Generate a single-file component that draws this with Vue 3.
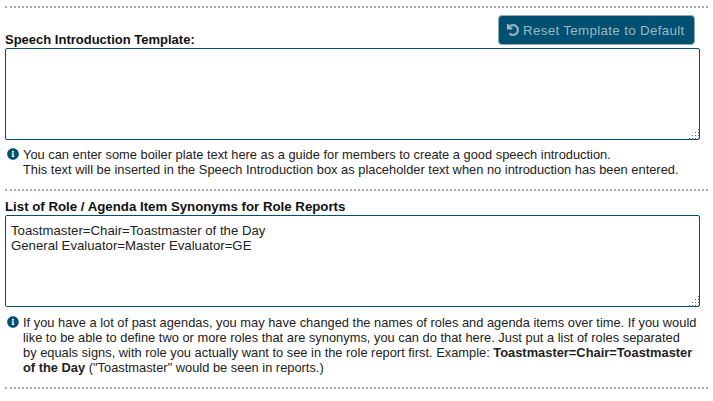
<template>
  <div class="page">
    <hr class="sep" />
    <div class="intro-head">
      <label class="field-label">Speech Introduction Template:</label>
      <button class="reset-btn" type="button" disabled>
        <svg class="undo" viewBox="0 0 512 512" width="12" height="12">
          <path fill="currentColor" stroke="currentColor" stroke-width="20" d="M212.333 224.333H12c-6.627 0-12-5.373-12-12V12C0 5.373 5.373 0 12 0h48c6.627 0 12 5.373 12 12v78.112C117.773 39.279 184.26 7.47 258.175 8.007c136.906.994 246.448 111.623 246.157 248.532C504.041 393.258 393.12 504 256.333 504c-64.089 0-122.496-24.313-166.51-64.215-5.099-4.622-5.334-12.554-.467-17.42l33.967-33.967c4.474-4.474 11.662-4.717 16.401-.525C170.76 415.336 211.58 432 256.333 432c97.268 0 176-78.716 176-176 0-97.267-78.716-176-176-176-58.496 0-110.28 28.476-142.274 72.333h98.274c6.627 0 12 5.373 12 12v48c0 6.627-5.373 12-12 12z" />
        </svg>
        Reset Template to Default
      </button>
    </div>
    <div class="area-wrap">
      <textarea class="area" readonly></textarea>
      <svg class="grip" width="10" height="10" viewBox="0 0 10 10">
        <rect v-for="d in gripDots" :key="d[0] + '-' + d[1]" :x="d[0]" :y="d[1]" width="1" height="1" fill="#666" />
      </svg>
    </div>
    <div class="help">
      <svg class="info" viewBox="0 0 512 512" width="12" height="12">
        <path fill="#005072" d="M256 8C119.043 8 8 119.083 8 256c0 136.997 111.043 248 248 248s248-111.003 248-248C504 119.083 392.957 8 256 8zm0 110c23.196 0 42 18.804 42 42s-18.804 42-42 42-42-18.804-42-42 18.804-42 42-42zm56 254c0 6.627-5.373 12-12 12h-88c-6.627 0-12-5.373-12-12v-24c0-6.627 5.373-12 12-12h12v-64h-12c-6.627 0-12-5.373-12-12v-24c0-6.627 5.373-12 12-12h64c6.627 0 12 5.373 12 12v100h12c6.627 0 12 5.373 12 12v24z" />
      </svg>
      <p>You can enter some boiler plate text here as a guide for members to create a good speech introduction.<br />This text will be inserted in the Speech Introduction box as placeholder text when no introduction has been entered.</p>
    </div>
    <hr class="sep" />
    <label class="field-label list-label">List of Role / Agenda Item Synonyms for Role Reports</label>
    <div class="area-wrap">
      <textarea class="area" readonly :value="synonyms"></textarea>
      <svg class="grip" width="10" height="10" viewBox="0 0 10 10">
        <rect v-for="d in gripDots" :key="d[0] + '-' + d[1]" :x="d[0]" :y="d[1]" width="1" height="1" fill="#666" />
      </svg>
    </div>
    <div class="help help-list">
      <svg class="info" viewBox="0 0 512 512" width="12" height="12">
        <path fill="#005072" d="M256 8C119.043 8 8 119.083 8 256c0 136.997 111.043 248 248 248s248-111.003 248-248C504 119.083 392.957 8 256 8zm0 110c23.196 0 42 18.804 42 42s-18.804 42-42 42-42-18.804-42-42 18.804-42 42-42zm56 254c0 6.627-5.373 12-12 12h-88c-6.627 0-12-5.373-12-12v-24c0-6.627 5.373-12 12-12h12v-64h-12c-6.627 0-12-5.373-12-12v-24c0-6.627 5.373-12 12-12h64c6.627 0 12 5.373 12 12v100h12c6.627 0 12 5.373 12 12v24z" />
      </svg>
      <p>If you have a lot of past agendas, you may have changed the names of roles and agenda items over time. If you would like to be able to define two or more roles that are synonyms, you can do that here. Just put a list of roles separated<br />by equals signs, with role you actually want to see in the role report first. Example: <b>Toastmaster=Chair=Toastmaster of the Day</b> ("Toastmaster" would be seen in reports.)</p>
    </div>
    <hr class="sep" />
  </div>
</template>

<script setup>
const synonyms = 'Toastmaster=Chair=Toastmaster of the Day\nGeneral Evaluator=Master Evaluator=GE'

const gripDots = [
  [9, 0],
  [6, 3], [9, 3],
  [3, 6], [6, 6], [9, 6],
  [0, 9], [3, 9], [6, 9], [9, 9]
]
</script>

<style>
html,
body {
  background: #fff;
}
</style>

<style scoped>
.page {
  width: 703px;
  padding: 6px 0 0 5px;
  font-family: "Liberation Sans", Arial, sans-serif;
  font-size: 13px;
  color: #222;
}

.sep {
  border: 0;
  border-top: 2px dotted #aaa;
  margin: 0;
  height: 0;
}

.intro-head {
  display: flex;
  justify-content: space-between;
  align-items: flex-end;
  padding: 7px 13px 0 0;
}

.reset-btn {
  display: flex;
  align-items: center;
  gap: 4px;
  width: 197px;
  height: 30px;
  margin-bottom: 2px;
  padding: 0 0 0 8px;
  box-sizing: border-box;
  background: #005072;
  border: 1px solid #8fa8b4;
  border-radius: 4px;
  color: #9db6c1;
  font-family: inherit;
  font-size: 13.33px;
  letter-spacing: .34px;
}

.field-label {
  display: block;
  font-weight: 700;
  font-size: 13px;
  line-height: 15px;
  color: #111;
}

.list-label {
  margin-top: 8px;
  font-size: 13.25px;
}

.area-wrap {
  position: relative;
  width: 695px;
  height: 92px;
  margin-top: 1px;
}

.area {
  display: block;
  width: 100%;
  height: 100%;
  box-sizing: border-box;
  margin: 0;
  padding: 7px 5px;
  border: 1px solid #005072;
  border-radius: 2px;
  resize: none;
  outline: none;
  font-family: inherit;
  font-size: 13.2px;
  line-height: 15px;
  color: #222;
}

.grip {
  position: absolute;
  right: 1px;
  bottom: 1px;
}

.help {
  display: flex;
  gap: 4px;
  margin-top: 7px;
  margin-bottom: 12px;
  width: 695px;
}

.help-list {
  margin-top: 8px;
}

.info {
  flex: none;
  margin: 1px 0 0 2px;
}

.help p {
  margin: 0;
  font-size: 12.87px;
  line-height: 15px;
  color: #222;
}
</style>
